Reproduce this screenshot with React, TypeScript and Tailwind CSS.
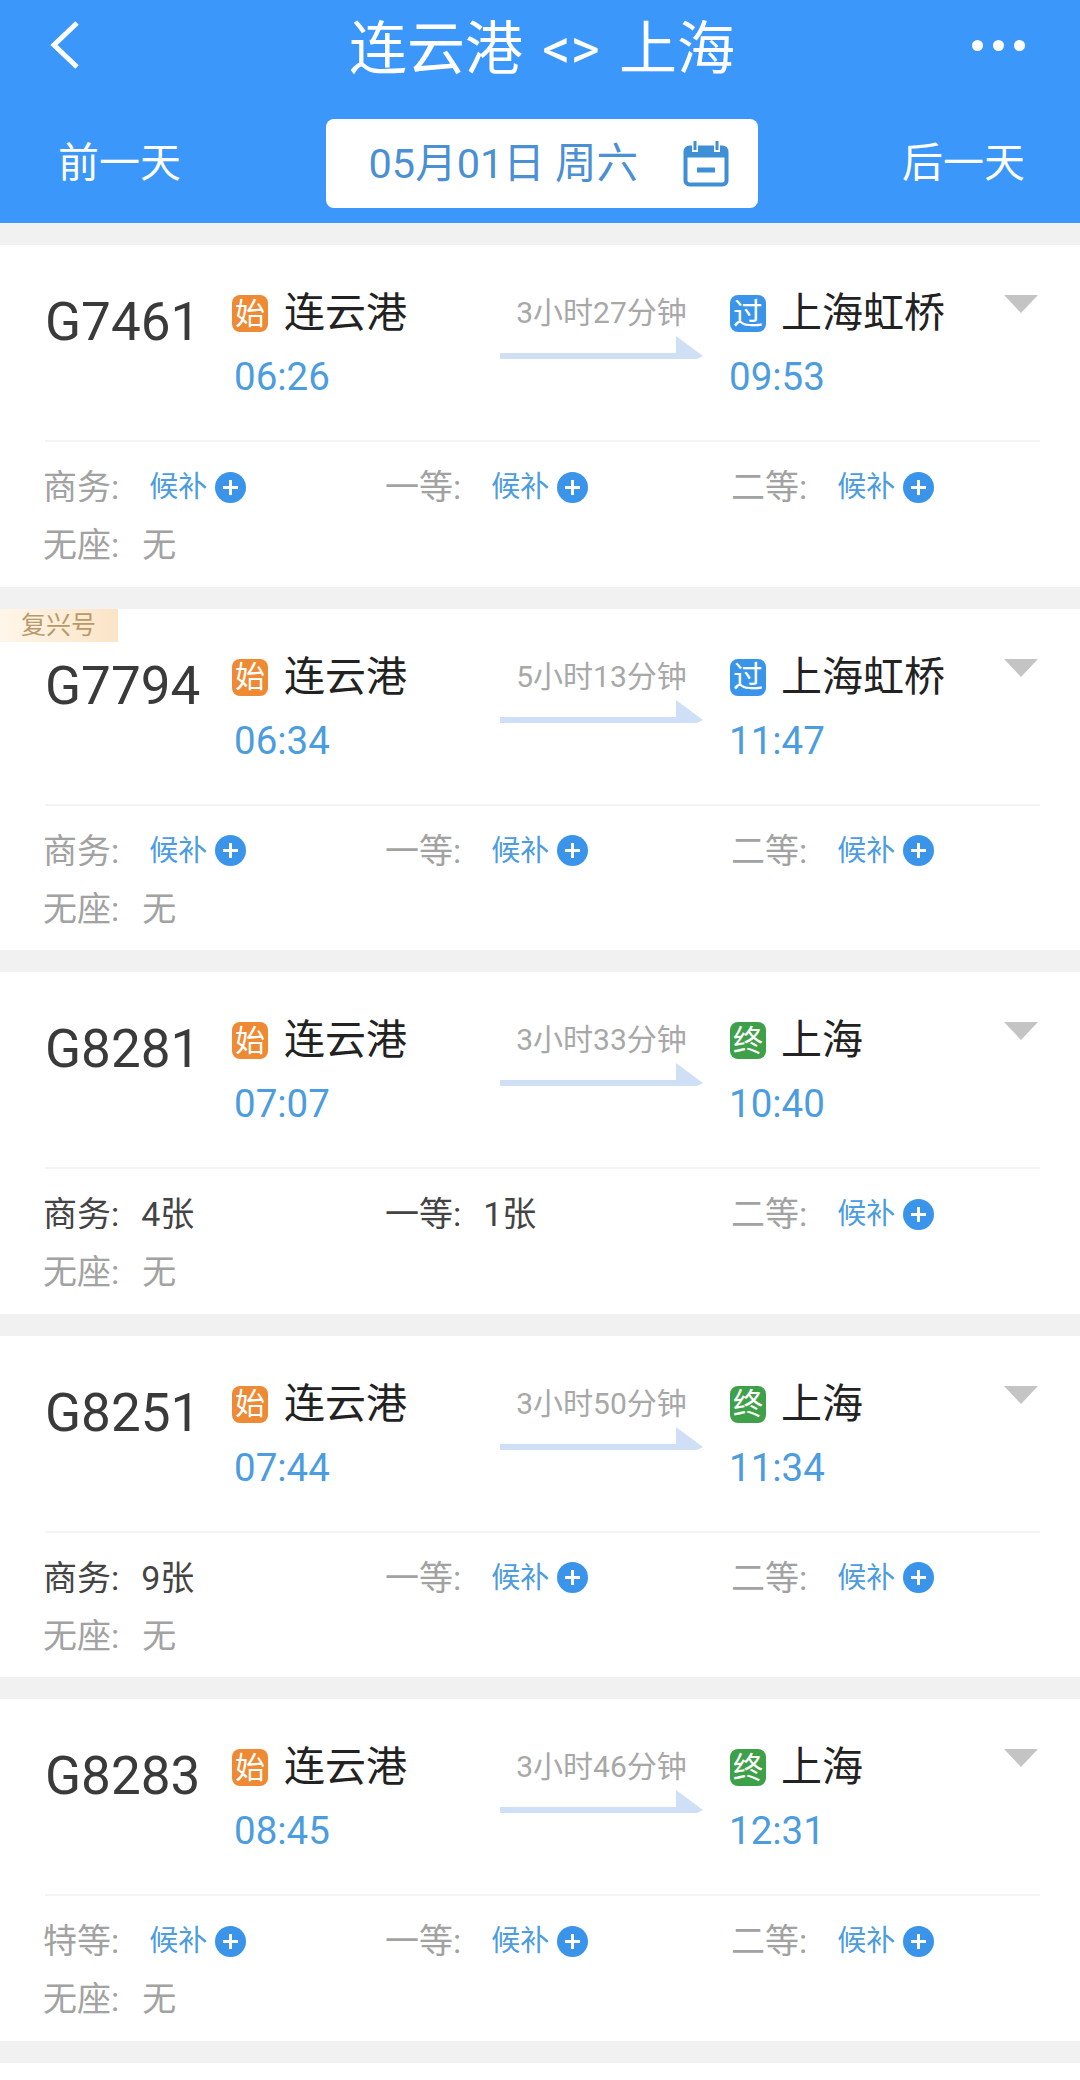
const FONT = "font-['Roboto','Noto_Sans_CJK_SC',sans-serif]"

type Seat = { label: string; value?: string }

interface Train {
  no: string
  tag?: string
  depart: string
  duration: string
  toBadge: '过' | '终'
  to: string
  arrive: string
  seats: Seat[]
}

const trains: Train[] = [
  { no: 'G7461', depart: '06:26', duration: '3小时27分钟', toBadge: '过', to: '上海虹桥', arrive: '09:53', seats: [{ label: '商务:' }, { label: '一等:' }, { label: '二等:' }] },
  { no: 'G7794', tag: '复兴号', depart: '06:34', duration: '5小时13分钟', toBadge: '过', to: '上海虹桥', arrive: '11:47', seats: [{ label: '商务:' }, { label: '一等:' }, { label: '二等:' }] },
  { no: 'G8281', depart: '07:07', duration: '3小时33分钟', toBadge: '终', to: '上海', arrive: '10:40', seats: [{ label: '商务:', value: '4张' }, { label: '一等:', value: '1张' }, { label: '二等:' }] },
  { no: 'G8251', depart: '07:44', duration: '3小时50分钟', toBadge: '终', to: '上海', arrive: '11:34', seats: [{ label: '商务:', value: '9张' }, { label: '一等:' }, { label: '二等:' }] },
  { no: 'G8283', depart: '08:45', duration: '3小时46分钟', toBadge: '终', to: '上海', arrive: '12:31', seats: [{ label: '特等:' }, { label: '一等:' }, { label: '二等:' }] },
]

const Badge = ({ text }: { text: string }) => (
  <span
    className={`flex h-[37px] w-[36px] shrink-0 items-center justify-center rounded-[8px] text-[30px] leading-none text-white ${
      text === '始' ? 'bg-[#ee8a34]' : text === '过' ? 'bg-[#3a94ea]' : 'bg-[#3fa04a]'
    }`}
  >
    {text}
  </span>
)

const PlusIcon = () => (
  <svg width="31" height="31" viewBox="0 0 31 31" className="ml-[8px] shrink-0">
    <circle cx="15.5" cy="15.5" r="15.5" fill="#3a94ea" />
    <path d="M8 15.5h15M15.5 8v15" stroke="#fff" strokeWidth="3" />
  </svg>
)

const Arrow = () => (
  <svg width="203" height="24" viewBox="0 0 203 24" className="mt-[1px]">
    <path d="M0 17h176V0l27 20-6 3H0z" fill="#cfe0f6" />
  </svg>
)

const SeatCell = ({ seat, width }: { seat: Seat; width: string }) => (
  <div className={`flex items-center ${width}`}>
    <span className={`text-[34px] leading-[46px] ${seat.value ? 'text-[#444]' : 'text-[#a2a2a2]'}`}>{seat.label}</span>
    {seat.value ? (
      <span className="ml-[22px] text-[34px] leading-[46px] text-[#444]">{seat.value}</span>
    ) : (
      <span className="ml-[30px] flex items-center text-[29px] leading-[46px] text-[#4c9ce0]">
        候补
        <PlusIcon />
      </span>
    )}
  </div>
)

const TrainCard = ({ train }: { train: Train }) => (
  <div className="relative mb-[22px] h-[341.5px] bg-white pl-[45px] pr-[40px]">
    {train.tag && (
      <div className="absolute left-0 top-0 flex h-[33px] w-[118px] items-center bg-gradient-to-r from-[#fff6ea] to-[#fbe4c6] pl-[21px] text-[25px] leading-none text-[#b89a6a]">
        {train.tag}
      </div>
    )}
    <div className="flex h-[197px] border-b-2 border-[#f4f4f4]">
      <div className="w-[187px] pt-[47px] text-[53px] leading-[60px] text-[#3a3a3a]">{train.no}</div>
      <div className="w-[268px] pt-[50px]">
        <div className="flex items-center">
          <Badge text="始" />
          <span className="ml-[16px] text-[41px] leading-[37px] text-[#222]">连云港</span>
        </div>
        <div className="ml-[2px] mt-[23px] text-[38.5px] leading-[44px] text-[#4c9ce0]">{train.depart}</div>
      </div>
      <div className="flex w-[229px] flex-col items-center pr-[26px] pt-[46px]">
        <div className="text-[30px] leading-[44px] text-[#a8a8a8]">{train.duration}</div>
        <Arrow />
      </div>
      <div className="flex-1 pt-[50px]">
        <div className="flex items-center pl-[1px]">
          <Badge text={train.toBadge} />
          <span className="ml-[15px] text-[41px] leading-[37px] text-[#222]">{train.to}</span>
        </div>
        <div className="mt-[23px] text-[38.5px] leading-[44px] text-[#4c9ce0]">{train.arrive}</div>
      </div>
      <div className="pr-[2px] pt-[50px]">
        <div className="h-0 w-0 border-x-[17px] border-t-[18px] border-x-transparent border-t-[#c4c4c4]" />
      </div>
    </div>
    <div className="-ml-[2px] flex pt-[22px]">
      <SeatCell seat={train.seats[0]} width="w-[342px]" />
      <SeatCell seat={train.seats[1]} width="w-[346px]" />
      <SeatCell seat={train.seats[2]} width="flex-1" />
    </div>
    <div className="-ml-[2px] mt-[12px] flex text-[34px] leading-[46px] text-[#a2a2a2]">
      <span>无座:</span>
      <span className="ml-[23px]">无</span>
    </div>
  </div>
)

export default function App() {
  return (
    <div className={`${FONT} h-[2080px] w-[1080px] overflow-hidden bg-[#f1f1f1]`}>
      <div className="h-[223px] bg-[#3b97f9] text-white">
        <div className="flex h-[90px] items-center justify-between pl-[50px] pr-[55px]">
          <svg width="30" height="48" viewBox="0 0 30 48" fill="none">
            <path d="M27 2 4 24l23 22" stroke="#fff" strokeWidth="5" />
          </svg>
          <div className="ml-[32px] mt-[8px] flex items-center text-[58px] leading-none">
            连云港
            <span className="mx-[19px] text-[56px] leading-none">&lt;&gt;</span>
            上海
          </div>
          <div className="flex gap-[10px]">
            <span className="h-[11px] w-[11px] rounded-full bg-white" />
            <span className="h-[11px] w-[11px] rounded-full bg-white" />
            <span className="h-[11px] w-[11px] rounded-full bg-white" />
          </div>
        </div>
        <div className="mt-[29px] flex items-center justify-between pl-[58px] pr-[55px]">
          <span className="text-[41px] leading-none">前一天</span>
          <div className="flex h-[89px] w-[432px] items-center rounded-[8px] bg-white pl-[43px] text-[41.5px] leading-none text-[#4a90d2]">
            <span>05月01日 周六</span>
            <svg width="46" height="46" viewBox="0 0 46 46" className="ml-[45px]" fill="none">
              <rect x="2.5" y="6.5" width="41" height="37" rx="4" stroke="#3f8fd6" strokeWidth="4" />
              <path d="M2 12h42" stroke="#3f8fd6" strokeWidth="9" />
              <path d="M12 1v10M34 1v10" stroke="#fff" strokeWidth="6" />
              <path d="M12 0v9M34 0v9" stroke="#3f8fd6" strokeWidth="3" />
              <path d="M14 29h18" stroke="#3f8fd6" strokeWidth="5" />
            </svg>
          </div>
          <span className="text-[41px] leading-none">后一天</span>
        </div>
      </div>
      <div className="pt-[22px]">
        {trains.map((train) => (
          <TrainCard key={train.no} train={train} />
        ))}
        <div className="mt-[3px] h-[20px] bg-white" />
      </div>
    </div>
  )
}
